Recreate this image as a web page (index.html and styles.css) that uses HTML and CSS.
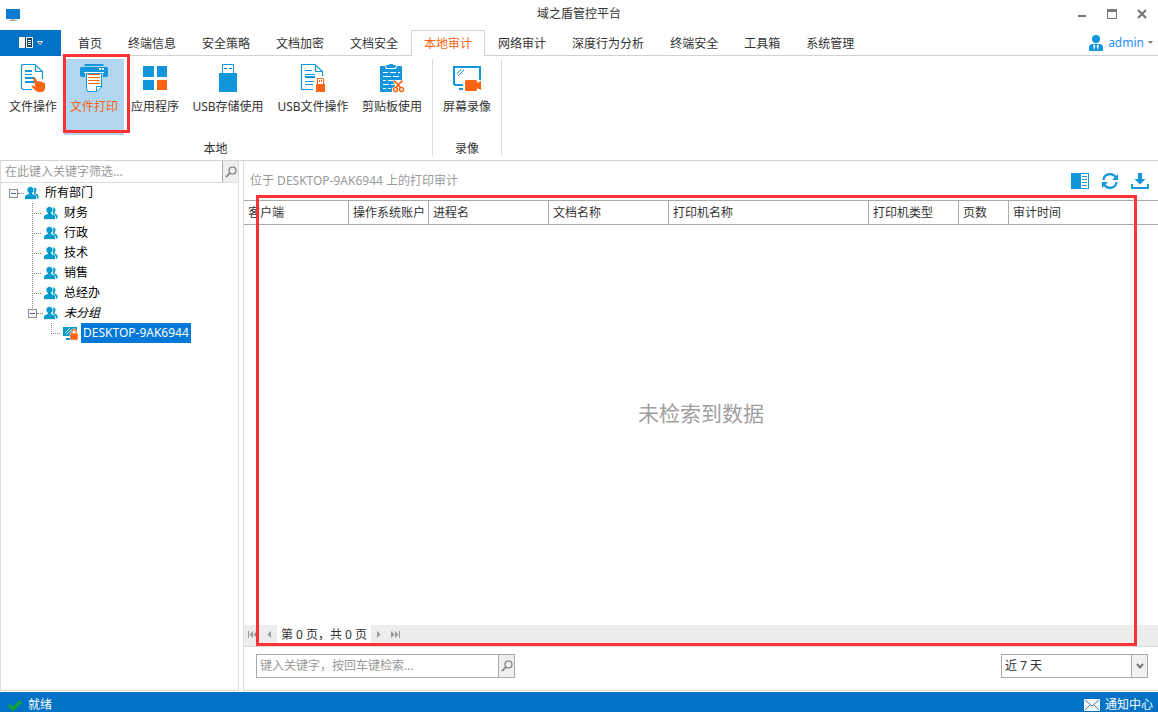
FILE: index.html
```html
<!DOCTYPE html>
<html lang="zh-CN">
<head>
<meta charset="utf-8">
<meta name="viewport" content="width=device-width, initial-scale=1">
<title>域之盾管控平台</title>
<link rel="stylesheet" href="styles.css">
</head>
<body>
<svg class="sprite" aria-hidden="true">
  <symbol id="users" viewBox="0 0 14 14">
    <path d="M9 1.500c1.600 0 2.500 1.200 2.500 2.500 0 1-.4 1.700-1 2.200v1.300c1.600.5 3 1.200 3 2.600v2.400H9z" fill="#0099cc"/>
    <path d="M5.500.5C7.500.5 9 1.900 9 3.900c0 1.300-.7 2.300-1.500 2.900v1c2 .6 4 1.400 4 3.200v2.500H-.5V11c0-1.800 2-2.600 4-3.200v-1C2.700 6.200 2 5.200 2 3.900 2 1.900 3.500.5 5.500.5z" fill="#0099cc" stroke="#fff" stroke-width=".8"/>
  </symbol>
  <symbol id="search" viewBox="0 0 14 14">
    <circle cx="8.500" cy="5.500" r="3.500" fill="none" stroke="#777" stroke-width="1.200"/>
    <path d="M6 8 2 12" stroke="#777" stroke-width="1.600"/>
  </symbol>
</svg>
<div class="app">
  <header class="titlebar">
    <svg class="app-icon" width="16" height="16" viewBox="0 0 16 16" aria-hidden="true"><path d="M1 2h14v10H1z" fill="#0a7bd0"/><path d="M6 12h4v1H6z" fill="#bbb"/><path d="M4 13h8v1H4z" fill="#aaa"/></svg>
    <h1 class="title">域之盾管控平台</h1>
    <div class="window-buttons">
      <button class="window-button" aria-label="最小化"><svg width="12" height="12"><path d="M2 7h8v2H2z" fill="#777"/></svg></button>
      <button class="window-button" aria-label="最大化"><svg width="12" height="12"><path d="M1 1h10v10H1zM2 4v6h8V4z" fill="#777" fill-rule="evenodd"/></svg></button>
      <button class="window-button" aria-label="关闭"><svg width="12" height="12"><path d="m2 2 8 8m0-8-8 8" stroke="#777" stroke-width="2.200"/></svg></button>
    </div>
  </header>

  <nav class="tabs">
    <button class="file-menu" aria-label="菜单">
      <svg width="26" height="14" viewBox="0 0 26 14"><path d="M1 1h6v11H1z" fill="#f4f4f4"/><path d="M7 1h1v11H7z" fill="#1d3f5e"/><path d="M8.500 1.500h6v10h-6z" fill="#1d3f5e" stroke="#fff"/><path d="M10 4.500h3M10 6.500h3M10 8.500h3" stroke="#fff"/><path d="M19.500 5.500h5L22 8.500z" fill="#1d3f5e" stroke="#fff"/></svg>
    </button>
    <a class="tab" href="#">首页</a>
    <a class="tab" href="#">终端信息</a>
    <a class="tab" href="#">安全策略</a>
    <a class="tab" href="#">文档加密</a>
    <a class="tab" href="#">文档安全</a>
    <a class="tab tab-active" href="#" aria-current="page">本地审计</a>
    <a class="tab" href="#">网络审计</a>
    <a class="tab" href="#">深度行为分析</a>
    <a class="tab" href="#">终端安全</a>
    <a class="tab" href="#">工具箱</a>
    <a class="tab" href="#">系统管理</a>
    <button class="account">
      <svg width="16" height="18" viewBox="0 0 16 18"><circle cx="8" cy="5" r="4" fill="#1296db"/><path d="M1 17v-4c0-2 1.500-3 4-3h6c2.500 0 4 1 4 3v4z" fill="#1296db"/><path d="m5 10 1 6 1.500-4zM11 10l-1 6-1.500-4z" fill="#fff"/></svg>
      admin
      <svg width="6" height="4"><path d="M0 0h5L2.500 3z" fill="#777"/></svg>
    </button>
  </nav>

  <div class="ribbon">
    <section class="group">
      <div class="group-tools">
        <button class="tool">
          <svg width="30" height="30" viewBox="0 0 30 30"><path d="M14 26.500H5L3.500 25V2.500l1-1H17l7.500 7V16M17.500 2v6.500H24" fill="none" stroke="#1296db" stroke-width="1.200"/><path d="M7 7h7v2H7zM7 11h7v1H7zM7 14h10v2H7zM7 18h10v2H7z" fill="#1296db"/><path d="M15.500 15c1-.7 2 0 2.500 1l1.500 3 1-1 1.500.7 1.500-.2 1.500 1 2 .5V25c0 2.500-1.500 4-4 4h-2c-2 0-3-1-4-2l-3-3c-.5-1 .5-1.800 1.500-1.300l2.200 1-2.300-7z" fill="#fa6310"/></svg>
          文件操作
        </button>
        <div class="marked">
          <button class="tool tool-active" aria-pressed="true">
            <svg width="30" height="30" viewBox="0 0 30 30"><path d="M6 1h18l1 2H5zM2 4h26l1 1v8l-2 1h-3v-4H6v4H3l-2-1V5z" fill="#1296db"/><path d="M20 5h2v2h-2zM23 5h2v2h-2z" fill="#fff"/><path d="M5 9h20v1H5z" fill="#fff"/><path d="M7.500 10.500h15V24L18 28.500H8.500l-1-3z" fill="#fff" stroke="#1296db"/><path d="M17.500 28v-4.500H22" fill="none" stroke="#1296db"/><path d="M9 11h12v1H9zM9 14h12v1H9zM9 17h12v1H9zM9 20h12v1H9z" fill="#fa6310"/></svg>
            文件打印
          </button>
          <div class="mark mark-tool"></div>
        </div>
        <button class="tool">
          <svg width="30" height="30" viewBox="0 0 30 30"><path d="M3 3h11v11H3zM17 3h10v11H17zM3 17h11v10H3z" fill="#1296db"/><path d="M17 17h10v10H17z" fill="#fa6310"/></svg>
          应用程序
        </button>
        <button class="tool tool-wide">
          <svg width="30" height="30" viewBox="0 0 30 30"><path d="M9.500 10V1.500h11V10" fill="#fff" stroke="#1296db"/><path d="M6 10h18v19H6z" fill="#1296db"/><path d="M11 5h3v1h-3zM16 5h3v1h-3z" fill="#1677a8"/></svg>
          USB存储使用
        </button>
        <button class="tool tool-wide">
          <svg width="30" height="30" viewBox="0 0 30 30"><path d="M15 26.500H3.500v-25H17l7.500 7V13M17.500 2v6.500H24" fill="none" stroke="#1296db" stroke-width="1.200"/><path d="M7 7h7v1H7zM7 11h10v1H7zM7 13h10v2H7zM7 18h9v1H7zM7 21h8v1H7z" fill="#1296db"/><path d="M19.500 21v-5.500h6V21" fill="#fff" stroke="#fa6310"/><path d="M21 17h1v2h-1zM23 17h1v2h-1zM18 21h9v8h-9z" fill="#fa6310"/></svg>
          USB文件操作
        </button>
        <button class="tool">
          <svg width="30" height="30" viewBox="0 0 30 30"><path d="M3 3h6V2h3V1h4v1h3v1h6v26H3z" fill="#1296db"/><path d="M9 3v2.500h10V3M6 9.500h5m2 0h6m2 0h2M6 13.500h8m2 0h6M6 17.500h3m2 0h5M6 21.500h6m2 0h3M6 25.500h3m2 0h3" fill="none" stroke="#fff"/><path d="M16 17h11v12H15v-4l3-2z" fill="#fff"/><path d="m17 17.500 6.500 7m2-7-6.500 7" stroke="#fa6310" stroke-width="1.800"/><circle cx="18.500" cy="26.500" r="2" fill="#fff" stroke="#fa6310" stroke-width="1.400"/><circle cx="24.500" cy="26.500" r="2" fill="#fff" stroke="#fa6310" stroke-width="1.400"/></svg>
          剪贴板使用
        </button>
      </div>
      <h2 class="group-name">本地</h2>
    </section>
    <section class="group">
      <div class="group-tools">
        <button class="tool">
          <svg width="30" height="30" viewBox="0 0 30 30"><path d="M11 22H3l-1-1V4h26v13" fill="none" stroke="#1296db" stroke-width="2"/><path d="M7 25h4v2H7z" fill="#1296db"/><path d="m4.500 11 5-5M6 13l6-6" stroke="#1296db"/><path d="M14 17h10l1 1v2l4-2v9l-4-2v2l-1 1H14l-1-1v-9z" fill="#fa6310"/></svg>
          屏幕录像
        </button>
      </div>
      <h2 class="group-name">录像</h2>
    </section>
  </div>

  <div class="body">
    <aside class="sidebar">
      <form class="filter">
        <input class="filter-input" type="text" aria-label="筛选" placeholder="在此键入关键字筛选...">
        <button class="search-button" type="button" aria-label="筛选"><svg width="14" height="14"><use href="#search"/></svg></button>
      </form>
      <ul class="tree">
        <li>
          <div class="node"><button class="toggle" aria-label="折叠"></button><span class="link"></span><svg width="14" height="14"><use href="#users"/></svg><span class="label">所有部门</span></div>
          <ul class="branch">
            <li class="node child"><svg width="14" height="14"><use href="#users"/></svg><span class="label">财务</span></li>
            <li class="node child"><svg width="14" height="14"><use href="#users"/></svg><span class="label">行政</span></li>
            <li class="node child"><svg width="14" height="14"><use href="#users"/></svg><span class="label">技术</span></li>
            <li class="node child"><svg width="14" height="14"><use href="#users"/></svg><span class="label">销售</span></li>
            <li class="node child"><svg width="14" height="14"><use href="#users"/></svg><span class="label">总经办</span></li>
            <li>
              <div class="node node-joined"><button class="toggle" aria-label="折叠"></button><span class="link"></span><svg width="14" height="14"><use href="#users"/></svg><span class="label ungrouped">未分组</span></div>
              <ul class="branch">
                <li class="node child last">
                  <svg width="16" height="16" viewBox="0 0 16 16"><path d="M0 2h14v9H0zM3 13h5v2H3z" fill="#0099cc"/><path d="m2 8 5-5M3.500 9.500l5-5" stroke="#fff" stroke-width=".8"/><path d="M7 8.500h1V7c0-4.500 6-4.500 6 0v1.500h1V15H7z" fill="#fa6310" stroke="#fff" stroke-width=".5"/><path d="M9.500 8.500V7c0-2.200 3-2.200 3 0v1.500z" fill="#fff"/></svg>
                  <span class="label selected">DESKTOP-9AK6944</span>
                </li>
              </ul>
            </li>
          </ul>
        </li>
      </ul>
    </aside>

    <main class="main">
      <div class="main-head">
        <h2 class="main-title">位于 DESKTOP-9AK6944 上的打印审计</h2>
        <button class="action" aria-label="详情"><svg width="20" height="20" viewBox="0 0 20 20"><path d="M1 2h18v16H1z" fill="#1296db"/><path d="M11 3h7v14h-7z" fill="#fff"/><path d="M12 5.500h5M12 8.500h5M12 11.500h5M12 14.500h5" stroke="#1296db"/></svg></button>
        <button class="action" aria-label="刷新"><svg width="20" height="20" viewBox="0 0 20 20" fill="none" stroke="#1296db" stroke-width="2.200"><path d="M3.500 9C4 2.500 12 1.500 15.500 6M16.500 11C16 17.500 8 18.500 4.500 14"/><path d="M18 3v6h-6zM2 17v-6h6z" fill="#1296db" stroke="none"/></svg></button>
        <button class="action" aria-label="下载"><svg width="20" height="20" viewBox="0 0 20 20"><path d="M8 2h4v6h3.500L10 13.500 4.500 8H8z" fill="#1296db"/><path d="M2 13v4h16v-4" fill="none" stroke="#1296db" stroke-width="2"/></svg></button>
      </div>
      <table class="records">
        <colgroup><col class="w-client"><col class="w-user"><col class="w-name"><col class="w-name"><col class="w-printer"><col class="w-type"><col class="w-pages"><col></colgroup>
        <thead><tr><th>客户端</th><th>操作系统账户</th><th>进程名</th><th>文档名称</th><th>打印机名称</th><th>打印机类型</th><th>页数</th><th>审计时间</th></tr></thead>
      </table>
      <p class="empty">未检索到数据</p>
      <div class="pager">
        <button class="page-button" aria-label="第一页"><svg width="10" height="8"><path d="M0 0h1v7H0zM5 0v7L1.500 3.500zM9 0v7L5.500 3.500z" fill="#999"/></svg></button>
        <button class="page-button" aria-label="上一页"><svg width="10" height="8"><path d="M7 0v7L3.500 3.500z" fill="#999"/></svg></button>
        <span class="page-text">第 0 页，共 0 页</span>
        <button class="page-button" aria-label="下一页"><svg width="10" height="8"><path d="M3 0v7l3.500-3.500z" fill="#999"/></svg></button>
        <button class="page-button" aria-label="最后一页"><svg width="10" height="8"><path d="M9 0h1v7H9zM1 0v7l3.500-3.500zM5 0v7l3.500-3.500z" fill="#999"/></svg></button>
      </div>
      <div class="main-foot">
        <form class="query">
          <input class="query-input" type="text" aria-label="检索" placeholder="键入关键字，按回车键检索...">
          <button class="search-button" type="button" aria-label="检索"><svg width="14" height="14"><use href="#search"/></svg></button>
        </form>
        <div class="range">
          <select class="range-select" aria-label="时间范围"><option>近 7 天</option></select>
          <span class="range-arrow"><svg width="8" height="8"><path d="m1 2 3 3.500L7 2" fill="none" stroke="#777" stroke-width="2"/></svg></span>
        </div>
      </div>
      <div class="mark mark-list"></div>
    </main>
  </div>

  <footer class="status">
    <svg width="16" height="14" viewBox="0 0 16 14"><path d="m2 7 4 4 8-8" fill="none" stroke="#12a13b" stroke-width="3.500"/></svg>
    <span>就绪</span>
    <a class="notices" href="#"><svg width="16" height="12" viewBox="0 0 16 12"><path d="M.5.5h15v11H.5z" fill="#eef3fa" stroke="#fff"/><path d="m1 1 7 6 7-6M1 11l5-5M15 11l-5-5" fill="none" stroke="#5b83b5"/></svg>通知中心</a>
  </footer>
</div>
</body>
</html>
```
FILE: styles.css
```css
* { box-sizing: border-box; }

body {
  margin: 0;
  background: #fff;
  color: #333;
  font: 12px/20px "Noto Sans", "Noto Sans CJK SC", sans-serif;
}

button, input, select {
  margin: 0;
  padding: 0;
  border: 0;
  border-radius: 0;
  background: none;
  color: inherit;
  font: inherit;
}

h1, h2, p, ul { margin: 0; padding: 0; font: inherit; list-style: none; }
a { color: inherit; text-decoration: none; }
svg { display: block; flex: none; }
.sprite { position: absolute; width: 0; height: 0; }

.app {
  display: flex;
  flex-direction: column;
  height: 100vh;
  overflow: hidden;
}

/* Title bar */
.titlebar {
  display: grid;
  grid-template-columns: 1fr auto 1fr;
  align-items: center;
  height: 30px;
  flex: none;
}
.app-icon { margin-left: 5px; }
.title { padding-bottom: 2px; }
.window-buttons { display: flex; justify-self: end; padding: 0 1px 2px 0; }
.window-button { display: grid; place-items: center; width: 30px; height: 28px; }

/* Tabs */
.tabs {
  display: flex;
  height: 26px;
  flex: none;
  border-bottom: 1px solid #d2d2d2;
  white-space: nowrap;
}
.file-menu {
  display: grid;
  place-items: center;
  width: 61px;
  height: 26px;
  margin-right: 4px;
  background: #0072c6;
}
.tab { height: 26px; padding: 0 13px; line-height: 28px; }
.tab-active {
  padding: 0 12px;
  border: 1px solid #d2d2d2;
  border-bottom: 0;
  background: #fff;
  color: #fa6310;
  line-height: 26px;
}
.account {
  display: flex;
  align-items: center;
  gap: 4px;
  margin-left: auto;
  padding-right: 4px;
  color: #1e90ff;
}

/* Ribbon */
.ribbon {
  display: flex;
  height: 105px;
  flex: none;
  padding: 3px 0 4px;
  border-bottom: 1px solid #d2d2d2;
}
.group {
  display: flex;
  flex-direction: column;
  justify-content: space-between;
  padding: 0 4px 0 3px;
  border-right: 1px solid #dcdcdc;
}
.group + .group { padding-left: 4px; }
.group-tools { display: flex; gap: 1px; }
.tool {
  display: flex;
  flex-direction: column;
  align-items: center;
  gap: 4px;
  height: 76px;
  padding: 4px 6px 0;
  white-space: nowrap;
}
.tool-wide { width: 84px; }
.tool-active { background: #b1d6f0; color: #fa6310; }
.group-name { text-align: center; line-height: 14px; }
.marked { position: relative; }

/* Red call-out frames */
.mark { position: absolute; border: 3px solid #fc3237; pointer-events: none; }
.mark-tool { inset: -5px -6px 2px -1px; }
.mark-list { inset: 34px 21px 44px 12px; }

/* Body */
.body {
  display: flex;
  flex: 1;
  gap: 4px;
  min-height: 0;
  padding-bottom: 1px;
}
.sidebar {
  width: 239px;
  flex: none;
  border: 1px solid #dcdcdc;
  border-top: 0;
}
.filter { display: flex; height: 22px; border-bottom: 1px solid #dcdcdc; }
.filter-input { flex: 1; min-width: 0; padding-left: 4px; }
::placeholder { color: #999; opacity: 1; }
.search-button {
  display: grid;
  place-items: center;
  width: 16px;
  flex: none;
  border-left: 1px solid #aaa;
  background: #eee;
}

.tree { padding-left: 8px; color: #000; }
.branch { padding-left: 19px; }
.node { display: flex; align-items: center; height: 20px; }
.toggle {
  width: 9px;
  height: 9px;
  flex: none;
  border: 1px solid #919191;
  background: linear-gradient(#4b63a7, #4b63a7) center / 5px 1px no-repeat #f8f8f8;
}
.link { width: 6px; margin-right: 1px; border-top: 1px dotted #777; }
.child {
  padding-left: 16px;
  background:
    repeating-linear-gradient(#888 0 1px, transparent 1px 2px) 4px 0 / 1px 20px no-repeat,
    repeating-linear-gradient(90deg, #888 0 1px, transparent 1px 2px) 4px 10px / 10px 1px no-repeat;
}
.last {
  background:
    repeating-linear-gradient(#888 0 1px, transparent 1px 2px) 4px 0 / 1px 10px no-repeat,
    repeating-linear-gradient(90deg, #888 0 1px, transparent 1px 2px) 4px 10px / 10px 1px no-repeat;
}
.node-joined {
  background: repeating-linear-gradient(#888 0 1px, transparent 1px 2px) 4px 0 / 1px 6px no-repeat;
}
.label { margin-left: 4px; padding: 0 2px; white-space: nowrap; }
.selected { margin-left: 2px; background: #0078d7; color: #fff; }
.ungrouped { font-style: italic; }

/* Main panel */
.main {
  position: relative;
  display: flex;
  flex: 1;
  flex-direction: column;
  min-width: 0;
  border-left: 1px solid #dcdcdc;
  border-bottom: 1px solid #dcdcdc;
}
.main-head {
  display: flex;
  align-items: center;
  gap: 10px;
  height: 39px;
  flex: none;
  padding: 0 8px 0 6px;
}
.main-title { flex: 1; color: #999; }
.records {
  width: 100%;
  table-layout: fixed;
  border-collapse: separate;
  border-spacing: 0;
  border: solid #aaa;
  border-width: 1px 0;
}
.records th {
  height: 23px;
  padding: 0 0 0 4px;
  border-right: 1px solid #aaa;
  font-weight: 400;
  text-align: left;
  white-space: nowrap;
}
.records th:last-child { border-right: 0; }
.w-client { width: 105px; }
.w-user { width: 80px; }
.w-name { width: 120px; }
.w-printer { width: 200px; }
.w-type { width: 90px; }
.w-pages { width: 50px; }
.empty {
  display: grid;
  flex: 1;
  place-items: center;
  padding-bottom: 24px;
  color: #a0a0a0;
  font-size: 21px;
}
.pager {
  display: flex;
  align-items: flex-start;
  height: 22px;
  flex: none;
  padding-left: 1px;
  border-bottom: 1px solid #dcdcdc;
  background: #ededed;
}
.page-button { display: grid; place-items: center; width: 16px; height: 19px; }
.page-text {
  min-width: 94px;
  background: #fff;
  line-height: 19px;
  text-align: center;
}
.main-foot {
  display: flex;
  align-items: center;
  justify-content: space-between;
  height: 43px;
  flex: none;
  padding: 0 10px 5px 12px;
}
.query { display: flex; width: 259px; height: 24px; border: 1px solid #aaa; }
.query-input { flex: 1; min-width: 0; padding-left: 3px; }
.range { display: flex; width: 147px; height: 24px; border: 1px solid #aaa; }
.range-select { flex: 1; padding-left: 3px; appearance: none; }
.range-arrow {
  display: grid;
  place-items: center;
  width: 16px;
  border-left: 1px solid #aaa;
  background: #f1f1f1;
  pointer-events: none;
}

/* Status bar */
.status {
  display: flex;
  align-items: center;
  gap: 5px;
  height: 20px;
  flex: none;
  padding: 5px 5px 0 7px;
  background: #0072c6;
  color: #fff;
  line-height: 14px;
}
.notices { display: flex; align-items: center; gap: 5px; margin-left: auto; }
```
